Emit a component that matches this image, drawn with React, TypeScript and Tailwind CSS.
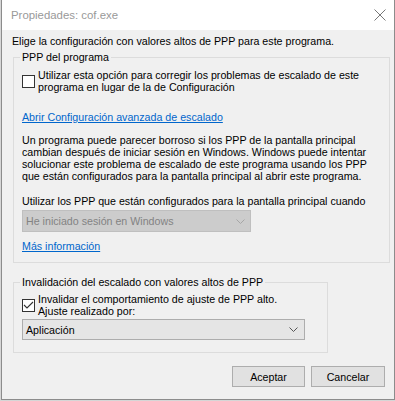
const Chevron = ({ color }: { color: string }) => (
  <svg width="9" height="5" viewBox="0 0 9 5" className="shrink-0">
    <polyline points="0.5,0.5 4.5,4.5 8.5,0.5" fill="none" stroke={color} strokeWidth="1" />
  </svg>
);

const Box = ({ checked }: { checked?: boolean }) => (
  <div className="w-[13px] h-[13px] shrink-0 border border-[#333333] bg-white">
    {checked && (
      <svg width="11" height="11" viewBox="0 0 11 11">
        <polyline points="1,5 4,8 10,2" fill="none" stroke="#333333" strokeWidth="1.1" />
      </svg>
    )}
  </div>
);

export default function App() {
  return (
    <div className="w-[395px] h-[401px] overflow-hidden bg-[#d6d6d6] font-['Liberation_Sans',Arial,sans-serif] text-[10.67px] leading-[12px] text-black">
      <div className="ml-[1px] w-[394px] h-[400px] border-x border-b border-[#8c8c8c] bg-[#f0f0f0] flex flex-col">
        {/* title bar */}
        <div className="h-[30px] shrink-0 bg-white flex items-center justify-between pl-[9px] pr-[8px]">
          <span className="text-[11.4px] text-[#999999]">Propiedades: cof.exe</span>
          <svg width="12" height="12" viewBox="0 0 12 12">
            <path d="M0.5 0.5 L11.5 11.5 M11.5 0.5 L0.5 11.5" stroke="#777777" strokeWidth="1" />
          </svg>
        </div>

        <div className="flex-1 flex flex-col">
          <p className="mt-[5px] pl-[10px]">Elige la configuración con valores altos de PPP para este programa.</p>

          <fieldset className="mt-[4px] ml-[11px] w-[377px] border border-[#dcdcdc] px-[8px] pt-[6px] pb-[10px]">
            <legend className="ml-[-2px] px-[2px]">PPP del programa</legend>
            <div className="flex items-center gap-[3px]">
              <Box />
              <span className="whitespace-nowrap">
                Utilizar esta opción para corregir los problemas de escalado de este
                <br />
                programa en lugar de la de Configuración
              </span>
            </div>
            <a className="block mt-[18px] text-[#0066cc] underline w-fit">Abrir Configuración avanzada de escalado</a>
            <p className="mt-[11px] whitespace-nowrap">
              Un programa puede parecer borroso si los PPP de la pantalla principal
              <br />
              cambian después de iniciar sesión en Windows. Windows puede intentar
              <br />
              solucionar este problema de escalado de este programa usando los PPP
              <br />
              que están configurados para la pantalla principal al abrir este programa.
            </p>
            <p className="mt-[13px]">Utilizar los PPP que están configurados para la pantalla principal cuando</p>
            <div className="mt-[3px] w-[229px] h-[22px] border border-[#bfbfbf] bg-[#cccccc] flex items-center justify-between pl-[3px] pr-[5px] text-[#838383]">
              <span>He iniciado sesión en Windows</span>
              <Chevron color="#a6a6a6" />
            </div>
            <a className="block mt-[8px] text-[#0066cc] underline w-fit">Más información</a>
          </fieldset>

          <fieldset className="mt-[13px] ml-[11px] w-[315px] border border-[#dcdcdc] px-[8px] pt-[5px] pb-[12px]">
            <legend className="ml-[-2px] px-[2px]">Invalidación del escalado con valores altos de PPP</legend>
            <div className="flex items-center gap-[3px]">
              <Box checked />
              <span className="whitespace-nowrap">
                Invalidar el comportamiento de ajuste de PPP alto.
                <br />
                Ajuste realizado por:
              </span>
            </div>
            <div className="mt-[2px] w-[283px] h-[21px] border border-[#adadad] bg-[#e5e5e5] flex items-center justify-between pl-[3px] pr-[6px]">
              <span>Aplicación</span>
              <Chevron color="#555555" />
            </div>
          </fieldset>

          <div className="mt-[13px] flex justify-end gap-[6px] pr-[9px]">
            <button className="w-[73px] h-[21px] border border-[#adadad] bg-[#e1e1e1]">Aceptar</button>
            <button className="w-[74px] h-[21px] border border-[#adadad] bg-[#e1e1e1]">Cancelar</button>
          </div>
        </div>
      </div>
    </div>
  );
}
